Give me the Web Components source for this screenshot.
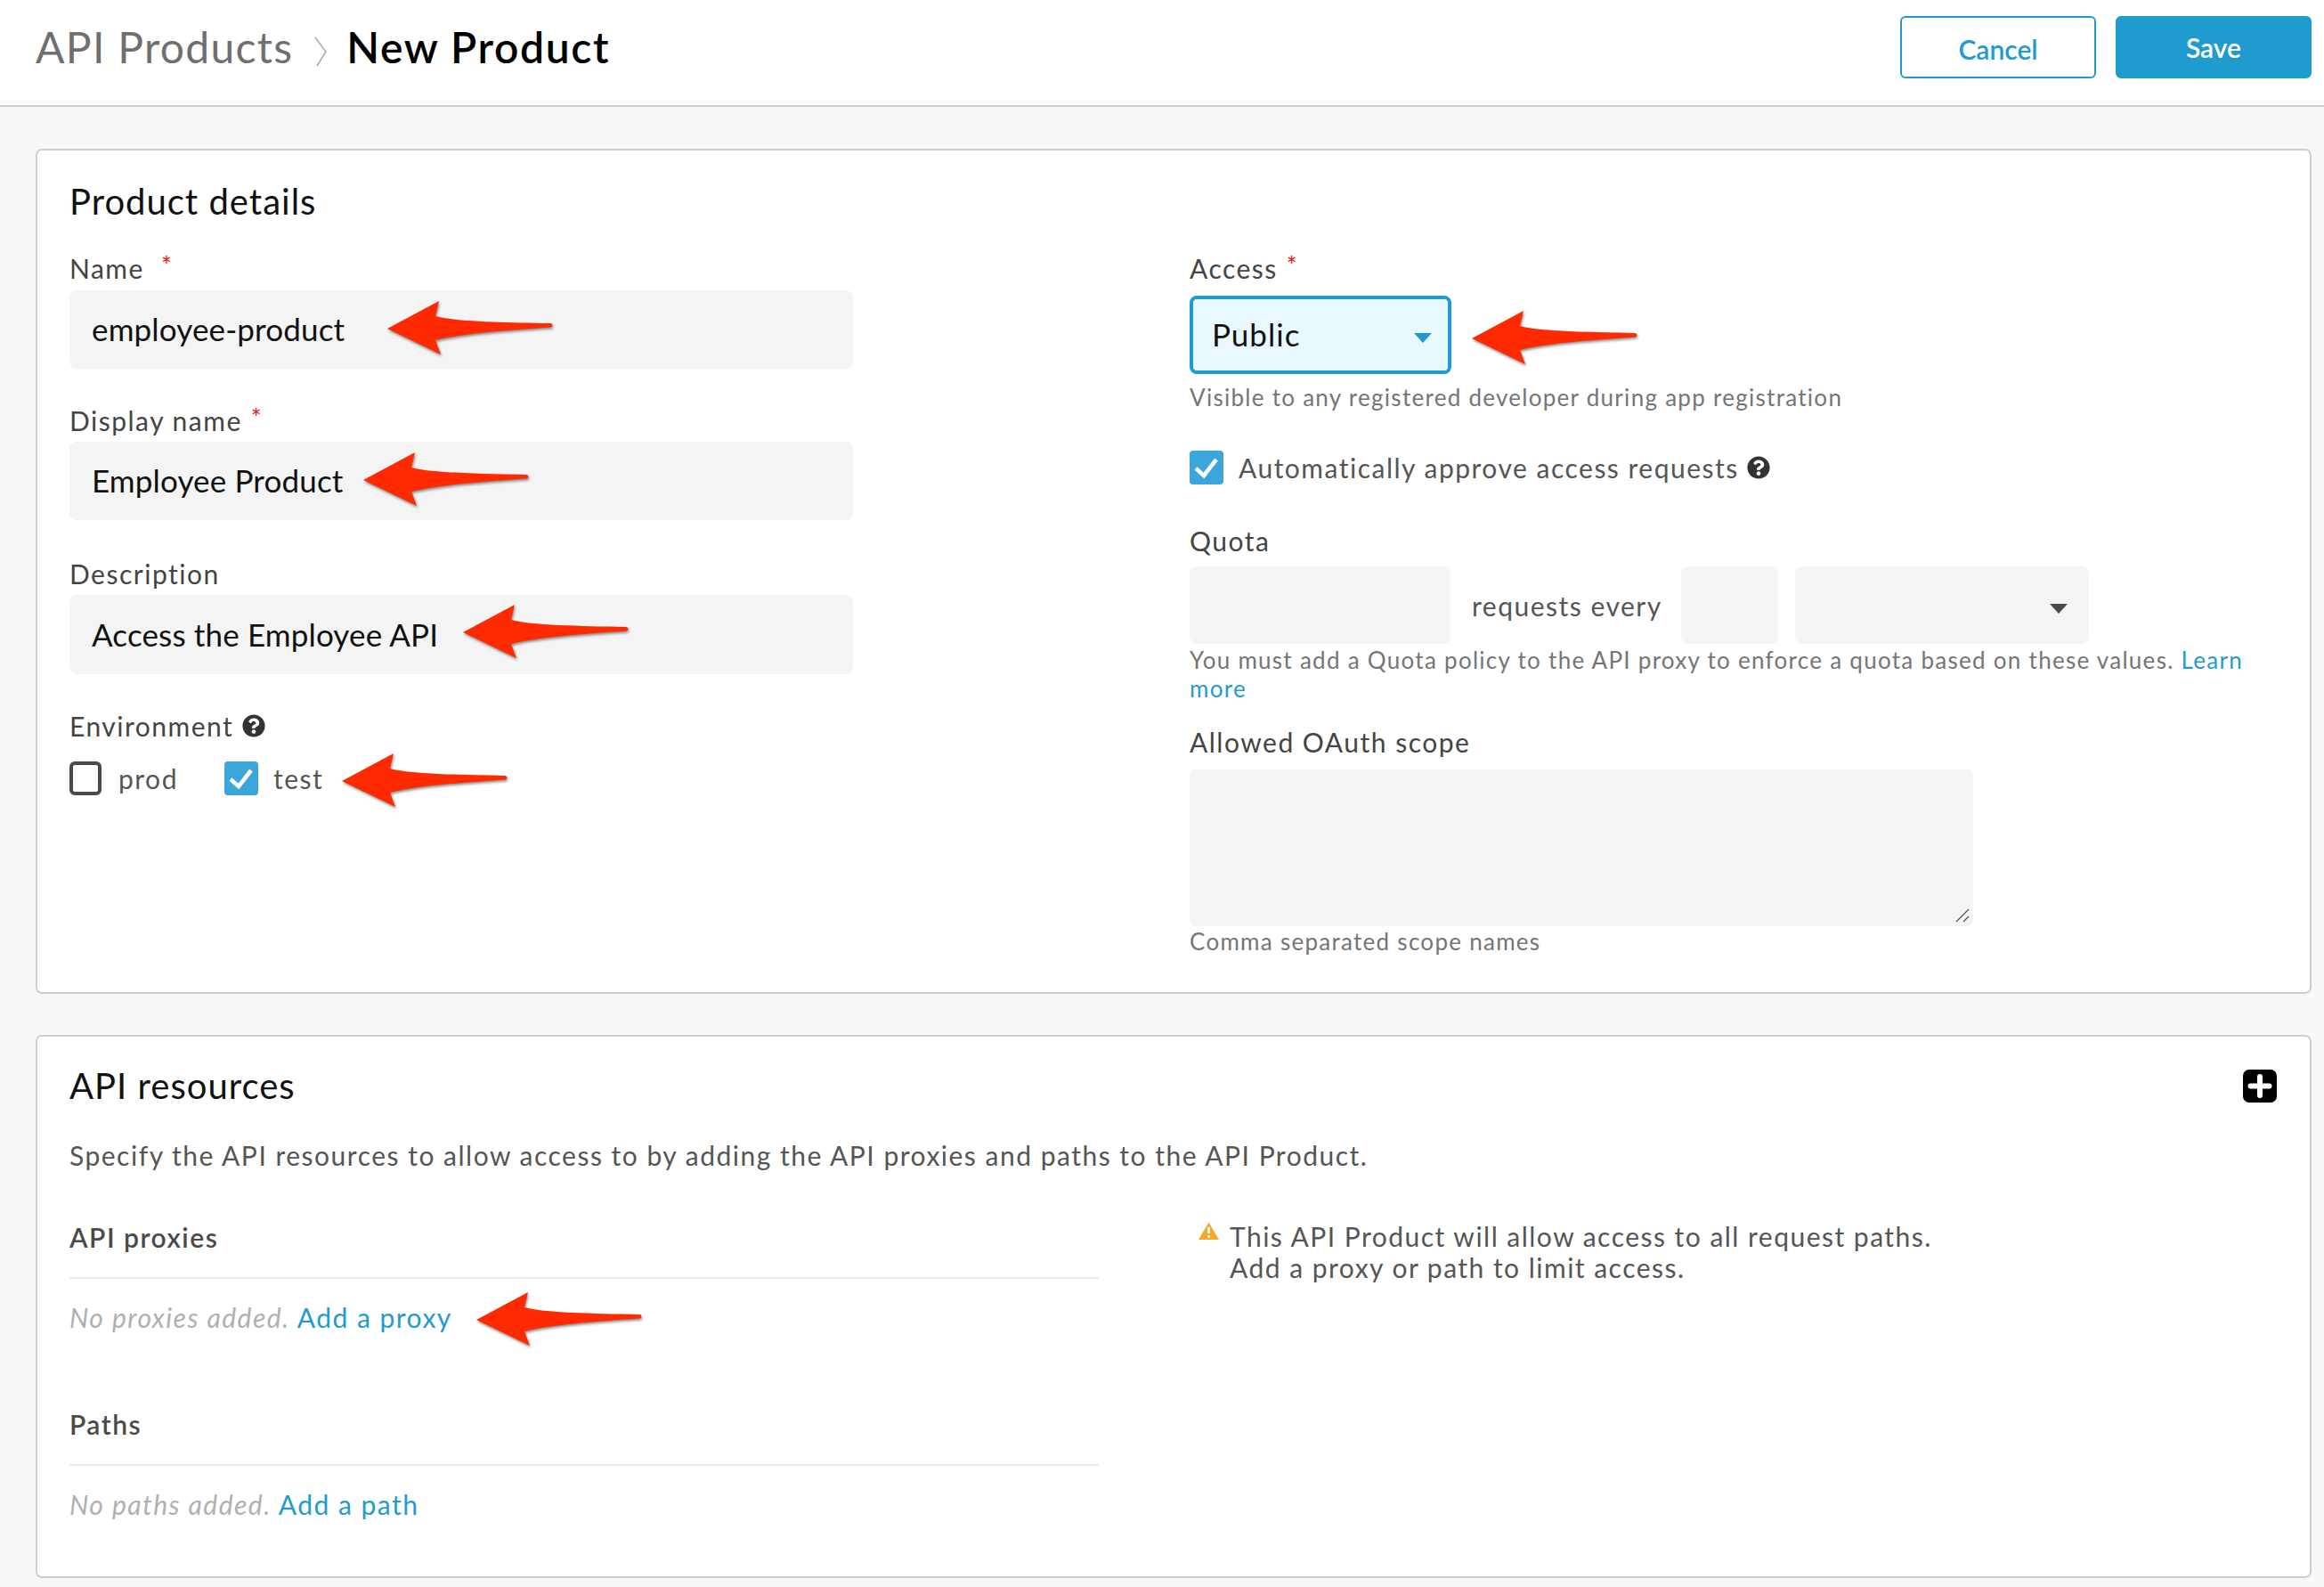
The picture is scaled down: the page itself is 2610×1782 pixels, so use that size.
<!DOCTYPE html>
<html>
<head>
<meta charset="utf-8">
<title>New Product</title>
<style>
  html, body { margin: 0; padding: 0; }
  body {
    position: relative;
    width: 2610px;
    height: 1782px;
    overflow: hidden;
    background: #f7f8f8;
    font-family: Lato, "Open Sans", sans-serif;
    color: #4a4a4a;
  }
  main { display: block; padding: 47px 14px 0 40px; }
</style>
</head>
<body>
  <page-header></page-header>
  <main>
    <ui-card title="Product details" style="height:949px; margin-bottom:46px">
      <two-cols left="1258px">
        <div slot="left">
          <form-field label="Name" required wide style="margin-top:32px"><text-input value="employee-product" style="margin-top:5px"></text-input></form-field>
          <form-field label="Display name" required style="margin-top:38px"><text-input value="Employee Product"></text-input></form-field>
          <form-field label="Description" style="margin-top:40px"><text-input value="Access the Employee API" style="height:89px"></text-input></form-field>
          <form-field label="Environment" help style="margin-top:38px">
            <check-row style="margin-top:20px">
              <check-box label="prod" style="width:174px; --label-gap:19px"></check-box>
              <check-box label="test" checked></check-box>
            </check-row>
          </form-field>
        </div>
        <div slot="right">
          <form-field label="Access" required style="margin-top:32px"><select-box value="Public" style="width:294px; margin-top:11px"></select-box></form-field>
          <hint-text style="margin-top:10px">Visible to any registered developer during app registration</hint-text>
          <check-box label="Automatically approve access requests" checked help style="margin-top:44px"></check-box>
          <form-field label="Quota" style="margin-top:40px">
            <quota-row style="margin-top:9px"></quota-row>
          </form-field>
          <hint-text style="margin-top:2px; width:1230px">You must add a Quota policy to the API proxy to enforce a quota based on these values. <link-text>Learn</link-text> <link-text>more</link-text></hint-text>
          <form-field label="Allowed OAuth scope" style="margin-top:24px"><text-area style="margin-top:11px"></text-area></form-field>
          <hint-text style="margin-top:1px">Comma separated scope names</hint-text>
        </div>
      </two-cols>
    </ui-card>

    <ui-card title="API resources" plus style="height:610px; padding-top:32px">
      <para-text style="margin-top:35px">Specify the API resources to allow access to by adding the API proxies and paths to the API Product.</para-text>
      <two-cols left="1268px" style="margin-top:52px">
        <div slot="left" style="width:1156px">
          <list-block heading="API proxies" empty="No proxies added." action="Add a proxy"></list-block>
          <list-block heading="Paths" empty="No paths added." action="Add a path" style="margin-top:80px"></list-block>
        </div>
        <warn-note slot="right" style="margin-top:2px">This API Product will allow access to all request paths.<br>Add a proxy or path to limit access.</warn-note>
      </two-cols>
    </ui-card>
  </main>

  <red-arrow style="left:435px; top:338px"></red-arrow>
  <red-arrow style="left:408px; top:508px"></red-arrow>
  <red-arrow style="left:520px; top:679px"></red-arrow>
  <red-arrow style="left:384px; top:846px"></red-arrow>
  <red-arrow style="left:1653px; top:349px"></red-arrow>
  <red-arrow style="left:535px; top:1451px"></red-arrow>

<script>
const HELP_ICON = `<svg viewBox="0 0 512 512" width="26" height="26" style="display:block;flex:none"><path fill="#333" d="M504 256c0 136.997-111.043 248-248 248S8 392.997 8 256C8 119.083 119.043 8 256 8s248 111.083 248 248zM262.655 90c-54.497 0-89.255 22.957-116.549 63.758-3.536 5.286-2.353 12.415 2.715 16.258l34.699 26.31c5.205 3.947 12.621 3.008 16.665-2.122 17.864-22.658 30.113-35.797 57.303-35.797 20.429 0 45.698 13.148 45.698 32.958 0 14.976-12.363 22.667-32.534 33.976C247.128 238.528 216 254.941 216 296v4c0 6.627 5.373 12 12 12h56c6.627 0 12-5.373 12-12v-1.333c0-28.462 83.186-29.647 83.186-106.667 0-58.002-60.165-102-116.531-102zM256 338c-25.365 0-46 20.635-46 46 0 25.364 20.635 46 46 46s46-20.636 46-46c0-25.365-20.635-46-46-46z"/></svg>`;

// small helper, every element below is just a shadow root filled from a string
class Base extends HTMLElement {
  constructor() {
    super();
    this.attachShadow({ mode: 'open' });
  }
  connectedCallback() {
    this.shadowRoot.innerHTML = this.render();
  }
  attr(name) {
    return this.getAttribute(name) || '';
  }
}

class PageHeader extends Base {
  render() {
    return `
      <style>
        :host { display: flex; align-items: center; height: 104px; padding: 0 14px 14px 40px; background: #fff; border-bottom: 2px solid #cdcfcf; }
        .crumb { font-size: 48px; letter-spacing: 1.3px; color: #6f6f6f; font-weight: 400; }
        .sep { margin: 12px 22px 0 24px; display: block; }
        .current { font-size: 48px; letter-spacing: 1.6px; color: #000; font-weight: 600; }
        .grow { flex: 1; }
        .btn { box-sizing: border-box; width: 220px; height: 70px; display: flex; align-items: center; justify-content: center; border-radius: 6px; font-size: 30px; font-weight: 600; border: 2px solid #1f9bd0; position: relative; top: 1px; }
        .cancel { background: #fff; color: #1f9bd0; margin-right: 22px; padding-top: 3px; }
        .save { background: #1f9bd0; color: #fff; }
      </style>
      <span class="crumb">API Products</span>
      <svg class="sep" width="14" height="34" viewBox="0 0 14 34"><path d="M1 1 L13 17 L3 33" fill="none" stroke="#a8a8a8" stroke-width="1.5"/></svg>
      <span class="current">New Product</span>
      <span class="grow"></span>
      <span class="btn cancel">Cancel</span>
      <span class="btn save">Save</span>`;
  }
}

class UiCard extends Base {
  render() {
    const plus = this.hasAttribute('plus')
      ? `<svg class="plus" width="38" height="37" viewBox="0 0 38 37"><rect width="38" height="37" rx="7" fill="#000"/><path d="M19 8v21M8.500 18.500h21" stroke="#fff" stroke-width="6" stroke-linecap="round"/></svg>`
      : '';
    return `
      <style>
        :host { display: block; box-sizing: border-box; position: relative; background: #fff; border: 2px solid #cdcfcf; border-radius: 7px; padding: 34px 36px 0 36px; }
        h2 { margin: 0; font-size: 40px; line-height: 46px; font-weight: 400; color: #111; letter-spacing: 1px; }
        .plus { position: absolute; right: 37px; top: 37px; }
      </style>
      <h2>${this.attr('title')}</h2>${plus}<slot></slot>`;
  }
}

class TwoCols extends Base {
  render() {
    return `
      <style>
        :host { display: grid; grid-template-columns: ${this.attr('left')} 1fr; }
      </style>
      <slot name="left"></slot><slot name="right"></slot>`;
  }
}

class FormField extends Base {
  render() {
    const star = this.hasAttribute('required') ? '<span class="star">*</span>' : '';
    const help = this.hasAttribute('help') ? HELP_ICON : '';
    return `
      <style>
        :host { display: block; }
        .label { display: flex; align-items: center; gap: ${this.hasAttribute('wide') ? 19 : 10}px; height: 40px; font-size: 30px; letter-spacing: 1.5px; color: #444; }
        .star { color: #f01818; font-size: 28px; align-self: flex-start; line-height: 30px; margin-top: 2px; }
      </style>
      <div class="label"><span>${this.attr('label')}</span>${star}${help}</div>
      <slot></slot>`;
  }
}

class TextInput extends Base {
  render() {
    return `
      <style>
        :host { display: flex; align-items: center; box-sizing: border-box; width: 880px; height: 88px; margin-top: 4px; padding: 0 25px 2px; background: #f4f4f4; border-radius: 8px; font-size: 35px; letter-spacing: 0.15px; color: #111; }
      </style>${this.attr('value')}`;
  }
}

class SelectBox extends Base {
  render() {
    return `
      <style>
        :host { display: flex; align-items: center; justify-content: space-between; box-sizing: border-box; height: 88px; padding: 0 18px 2px 21px; background: #e9f8fe; border: 4px solid #1f9bd0; border-radius: 8px; font-size: 35px; letter-spacing: 1px; color: #111; }
        i { width: 0; height: 0; border: 10px solid transparent; border-top: 11px solid #1f9bd0; border-bottom: 0; margin-top: 8px; }
      </style><span>${this.attr('value')}</span><i></i>`;
  }
}

class CheckBox extends Base {
  render() {
    const checked = this.hasAttribute('checked');
    const box = checked
      ? `<svg class="box" width="38" height="38" viewBox="0 0 38 38"><rect width="38" height="38" rx="4" fill="#3aa6db"/><path d="M7 20l9 8L30 10" fill="none" stroke="#fff" stroke-width="4.500"/></svg>`
      : `<svg class="box" width="36" height="38" viewBox="0 0 36 38"><rect x="2" y="2" width="32" height="34" rx="4" fill="#fff" stroke="#4a4a4a" stroke-width="4"/></svg>`;
    const help = this.hasAttribute('help') ? HELP_ICON : '';
    return `
      <style>
        :host { display: inline-flex; align-items: center; height: 38px; font-size: 30px; letter-spacing: 1.5px; color: #555; }
        .box { display: block; flex: none; }
        span { margin-left: var(--label-gap, 17px); margin-right: 9px; }
      </style>${box}<span>${this.attr('label')}</span>${help}`;
  }
}

class CheckRow extends Base {
  render() {
    return `<style>:host { display: flex; }</style><slot></slot>`;
  }
}

class QuotaRow extends Base {
  render() {
    return `
      <style>
        :host { display: flex; align-items: center; height: 87px; }
        .f { height: 87px; background: #f4f4f4; border-radius: 8px; box-sizing: border-box; }
        .t { font-size: 30px; letter-spacing: 1.5px; color: #555; margin: 0 21px 0 24px; width: 214px; white-space: nowrap; }
        .sel { display: flex; align-items: center; justify-content: flex-end; padding-right: 24px; }
        i { width: 0; height: 0; border: 10px solid transparent; border-top: 11px solid #4a4a4a; border-bottom: 0; margin-top: 8px; }
      </style>
      <div class="f" style="width:293px"></div>
      <div class="t">requests every</div>
      <div class="f" style="width:109px; margin-right:19px"></div>
      <div class="f sel" style="width:330px"><i></i></div>`;
  }
}

class TextArea extends Base {
  render() {
    return `
      <style>
        :host { display: block; position: relative; box-sizing: border-box; width: 880px; height: 176px; background: #f4f4f4; border-radius: 8px; }
        svg { position: absolute; right: 4px; bottom: 4px; }
      </style>
      <svg width="16" height="16" viewBox="0 0 16 16"><path d="M1 15L15 1M9 15L15 9" stroke="#555" stroke-width="1.300" fill="none"/></svg>`;
  }
}

class HintText extends Base {
  render() {
    return `
      <style>
        :host { display: block; font-size: 26px; line-height: 32px; letter-spacing: 1.280px; color: #757575; }
      </style><slot></slot>`;
  }
}

class LinkText extends Base {
  render() {
    return `<style>:host { color: #1f9bd0; }</style><slot></slot>`;
  }
}

class ParaText extends Base {
  render() {
    return `
      <style>
        :host { display: block; font-size: 30px; line-height: 40px; letter-spacing: 1.500px; color: #555; }
      </style><slot></slot>`;
  }
}

class ListBlock extends Base {
  render() {
    return `
      <style>
        :host { display: block; }
        h3 { margin: 0; font-size: 30px; line-height: 40px; font-weight: 600; letter-spacing: 1.500px; color: #4a4a4a; padding-bottom: 25px; border-bottom: 2px solid #ebebeb; }
        p { margin: 23px 0 0 0; font-size: 30px; line-height: 40px; letter-spacing: 1.480px; }
        em { color: #b0b0b0; }
        span { color: #1f9bd0; }
      </style>
      <h3>${this.attr('heading')}</h3>
      <p><em>${this.attr('empty')}</em> <span>${this.attr('action')}</span></p>`;
  }
}

class WarnNote extends Base {
  render() {
    return `
      <style>
        :host { display: flex; font-size: 30px; line-height: 35px; letter-spacing: 1.480px; color: #555; }
        svg { flex: none; margin-right: 12px; margin-top: 1px; }
      </style>
      <svg width="23" height="20" viewBox="0 0 23 20"><path d="M11.500 0.500L23 20H0Z" fill="#f6a72e"/><path d="M11.500 6v7M11.500 15v3" stroke="#fff" stroke-width="2.600"/></svg>
      <div><slot></slot></div>`;
  }
}

class RedArrow extends Base {
  render() {
    return `
      <style>
        :host { position: absolute; display: block; width: 190px; height: 66px; }
        svg { display: block; overflow: visible; filter: drop-shadow(1px 2px 1.500px rgba(0,0,0,.45)); }
      </style>
      <svg width="190" height="66" viewBox="0 0 190 66"><path fill="#ff2a00" d="M0 31 L58 0 L54 17 C76 23 130 24 183 25 C186 25 186.500 29 183 29.500 C130 33 82 37 54 44 L60 60 Z"/></svg>`;
  }
}

customElements.define('page-header', PageHeader);
customElements.define('ui-card', UiCard);
customElements.define('two-cols', TwoCols);
customElements.define('form-field', FormField);
customElements.define('text-input', TextInput);
customElements.define('select-box', SelectBox);
customElements.define('check-box', CheckBox);
customElements.define('check-row', CheckRow);
customElements.define('quota-row', QuotaRow);
customElements.define('text-area', TextArea);
customElements.define('hint-text', HintText);
customElements.define('link-text', LinkText);
customElements.define('para-text', ParaText);
customElements.define('list-block', ListBlock);
customElements.define('warn-note', WarnNote);
customElements.define('red-arrow', RedArrow);
</script>
</body>
</html>
